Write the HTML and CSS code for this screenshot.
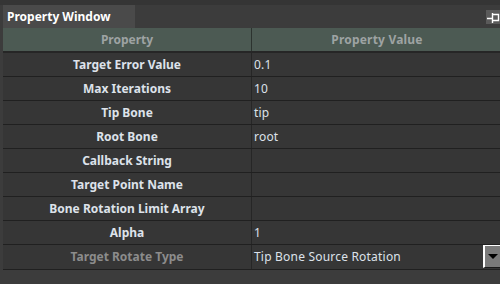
FILE: index.html
```html
<!DOCTYPE html>
<html>
<head>
    <title>Property Window</title>
    <link rel="stylesheet" href="styles.css">
</head>
<body>
    <div class="tabbar">
        <div class="tab">Property Window</div>
        <div class="pin">
            <svg width="14" height="14" viewBox="0 0 14 14">
                <path d="M1 8.5H6M6.5 3V13M7 4.5H12.5V10.5H7" fill="none" stroke="#fff" stroke-width="1.4"/>
            </svg>
        </div>
    </div>
    <div class="grid">
        <div class="row head">
            <div class="cell name">Property</div>
            <div class="cell value">Property Value</div>
        </div>
        <div class="row">
            <div class="cell name">Target Error Value</div>
            <div class="cell value">0.1</div>
        </div>
        <div class="row">
            <div class="cell name">Max Iterations</div>
            <div class="cell value">10</div>
        </div>
        <div class="row">
            <div class="cell name">Tip Bone</div>
            <div class="cell value">tip</div>
        </div>
        <div class="row">
            <div class="cell name">Root Bone</div>
            <div class="cell value">root</div>
        </div>
        <div class="row">
            <div class="cell name">Callback String</div>
            <div class="cell value"></div>
        </div>
        <div class="row">
            <div class="cell name">Target Point Name</div>
            <div class="cell value"></div>
        </div>
        <div class="row">
            <div class="cell name">Bone Rotation Limit Array</div>
            <div class="cell value"></div>
        </div>
        <div class="row">
            <div class="cell name">Alpha</div>
            <div class="cell value">1</div>
        </div>
        <div class="row last">
            <div class="cell name disabled">Target Rotate Type</div>
            <div class="cell value combo">
                <span>Tip Bone Source Rotation</span>
                <div class="drop"></div>
            </div>
        </div>
    </div>
</body>
</html>
```

FILE: styles.css
```css
body {
    margin: 0;
    width: 500px;
    height: 284px;
    overflow: hidden;
    background-color: #3c3c3c;
    font-family: "Noto Sans", "Open Sans", sans-serif;
    font-size: 12px;
    color: #dde2ea;
}
.tabbar {
    display: flex;
    justify-content: space-between;
    align-items: flex-end;
    height: 28px;
    padding-left: 3px;
    box-sizing: border-box;
    border-top: 5px solid #353535;
}
.tab {
    width: 128px;
    height: 23px;
    line-height: 23px;
    padding-left: 4px;
    background-color: #4a4a4a;
    color: #ffffff;
    font-weight: bold;
    font-size: 12px;
}
.pin {
    align-self: flex-start;
    margin-top: 5px;
    width: 14px;
    height: 14px;
    background-color: #5a5a5a;
}
.pin svg {
    display: block;
}
.grid {
    margin-left: 3px;
}
.row {
    display: grid;
    grid-template-columns: 249px 1fr;
    height: 24px;
    box-sizing: border-box;
    border-bottom: 1px solid #202020;
    background-color: #363636;
}
.row.head {
    background-color: #4c5a53;
    color: #9ea3a3;
    border-bottom: 2px solid #262626;
    height: 25px;
}
.row.last {
    height: 25px;
}
.cell {
    line-height: 23px;
    white-space: nowrap;
    overflow: hidden;
}
.name {
    text-align: center;
    font-weight: bold;
    border-right: 1px solid #262626;
}
.head .name {
    border-right-color: #2c332f;
}
.head .value {
    text-align: center;
    font-weight: bold;
}
.value {
    padding-left: 2px;
    letter-spacing: 0.2px;
}
.disabled {
    color: #8c8c8c;
}
.combo {
    display: flex;
    justify-content: space-between;
}
.drop {
    position: relative;
    width: 17px;
    height: 23px;
    box-sizing: border-box;
    background-color: #7a7a7a;
    border-top: 1px solid #ffffff;
    border-left: 2px solid #ffffff;
    border-bottom: 1px solid #1a1a1a;
}
.drop::after {
    content: "";
    position: absolute;
    left: 3px;
    top: 8px;
    border-left: 5px solid transparent;
    border-right: 5px solid transparent;
    border-top: 5px solid #000000;
}
```
